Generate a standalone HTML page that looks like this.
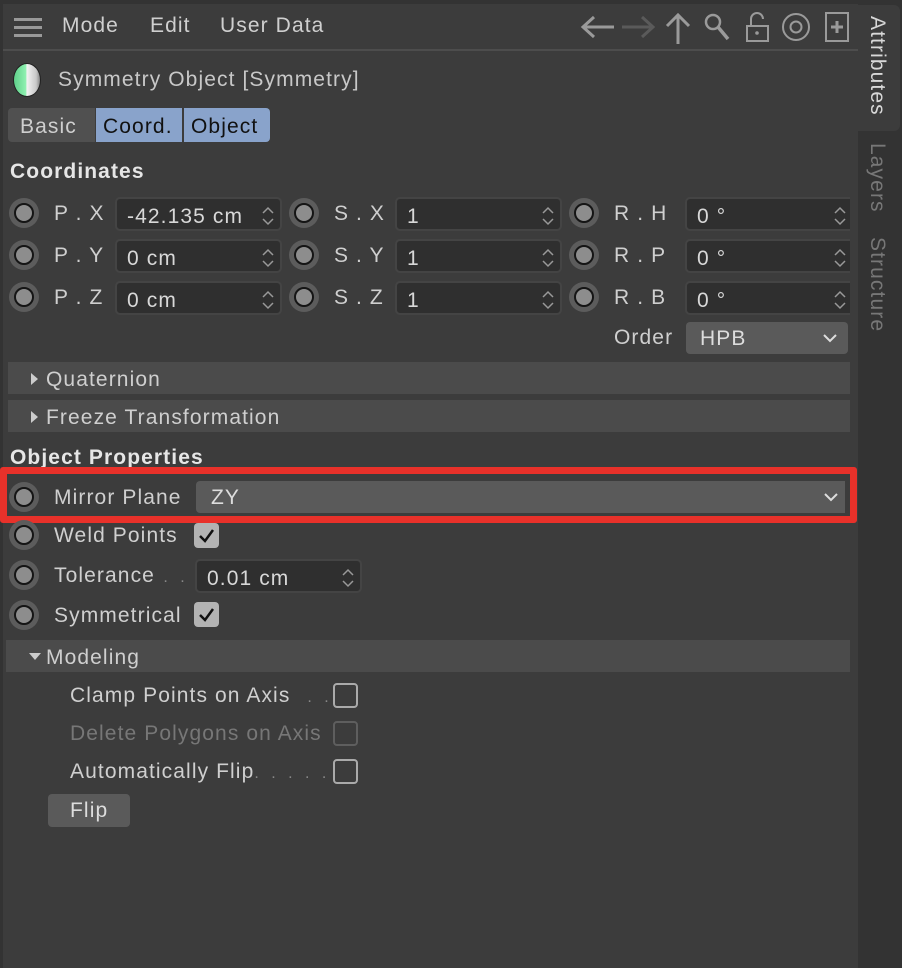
<!DOCTYPE html>
<html><head><meta charset="utf-8"><style>
*{box-sizing:border-box;margin:0;padding:0}
body{width:902px;height:968px;background:#3c3c3c;font-family:"Liberation Sans",sans-serif;color:#cfcfcf;position:relative;overflow:hidden;font-size:21px;letter-spacing:1.1px}
.a{position:absolute}
.t{position:absolute;line-height:1;white-space:nowrap}
.rad{position:absolute;width:30px;height:30px;border-radius:50%;background:#5c5c5c}
.rad::after{content:"";position:absolute;left:5px;top:5px;width:20px;height:20px;border-radius:50%;background:#8d8d8d;border:2px solid #151515;box-sizing:border-box}
.fld{position:absolute;height:34px;background:#2f2f2f;border:2px solid #444;border-radius:5px}
.fld span{position:absolute;left:10px;top:6px;font-size:21px;color:#d8d8d8}
.sp{position:absolute;right:4px;top:6px}
.bar{position:absolute;left:8px;width:842px;height:32px;background:#4b4b4b}
.cb{position:absolute;width:25px;height:25px;border-radius:4px}
</style></head><body>
<div class="a" style="left:0;top:0;width:858px;height:4px;background:#333"></div>
<div class="a" style="left:0;top:0;width:3px;height:968px;background:#333"></div>
<div class="a" style="left:858px;top:0;width:44px;height:968px;background:#333"></div>
<div class="a" style="left:858px;top:5px;width:42px;height:126px;background:#3c3c3c;border-radius:0 6px 6px 0"></div>
<div class="a" style="left:14px;top:18px;width:28px;height:3px;background:#999;box-shadow:0 8px 0 #999,0 16px 0 #999"></div>
<div class="t" style="left:62px;top:15px">Mode</div>
<div class="t" style="left:150px;top:15px">Edit</div>
<div class="t" style="left:220px;top:15px">User Data</div>
<div class="a" style="left:3px;top:49px;width:855px;height:2px;background:#4d4d4d"></div>
<svg class="a" style="left:578px;top:10px" width="280" height="36" viewBox="0 0 280 36" fill="none" stroke-width="3">
<path d="M36 17H6M16 7L5 17L16 27" stroke="#9a9a9a"/>
<path d="M44 17H74M64 7L75 17L64 27" stroke="#5a5a5a"/>
<path d="M100 34V5M89 16L100 5L111 16" stroke="#9a9a9a"/>
<circle cx="135" cy="12" r="7" stroke="#9a9a9a" stroke-width="2.5"/><path d="M140 17L150 29" stroke="#9a9a9a" stroke-width="3.5"/>
<rect x="169" y="16" width="21" height="15" stroke="#9a9a9a" stroke-width="2"/><path d="M173 16V9a6 6 0 0 1 12 0" stroke="#9a9a9a" stroke-width="2"/><circle cx="179" cy="23" r="1.8" fill="#9a9a9a" stroke="none"/>
<circle cx="218" cy="17" r="13" stroke="#9a9a9a" stroke-width="2"/><circle cx="218" cy="17" r="5.5" stroke="#9a9a9a" stroke-width="2"/>
<rect x="248" y="3" width="22" height="28" stroke="#9a9a9a" stroke-width="2"/><path d="M259 11V23M253 17H265" stroke="#9a9a9a" stroke-width="3"/>
</svg>
<div class="t" style="left:867px;top:16px;writing-mode:vertical-rl;color:#d8d8d8">Attributes</div>
<div class="t" style="left:867px;top:143px;writing-mode:vertical-rl;color:#777">Layers</div>
<div class="t" style="left:867px;top:237px;writing-mode:vertical-rl;color:#777">Structure</div>
<div class="a" style="left:13px;top:63px;width:28px;height:34px;border-radius:50%;background:linear-gradient(90deg,#5fd08a 0,#8ef0b0 45%,#f2f2f2 50%,#c8c8c8 85%,#888 100%);border:1px solid #222"></div>
<div class="t" style="left:58px;top:69px;color:#c8c8c8">Symmetry Object [Symmetry]</div>
<div class="a" style="left:8px;top:108px;width:87px;height:34px;background:#505050;border-radius:4px 0 0 4px"></div>
<div class="t" style="left:20px;top:116px;color:#cfcfcf">Basic</div>
<div class="a" style="left:96px;top:108px;width:86px;height:34px;background:#89a3cb"></div>
<div class="t" style="left:103px;top:116px;color:#111">Coord.</div>
<div class="a" style="left:184px;top:108px;width:86px;height:34px;background:#89a3cb;border-radius:0 4px 4px 0"></div>
<div class="t" style="left:191px;top:116px;color:#111">Object</div>
<div class="t" style="left:10px;top:161px;font-weight:bold;color:#e6e6e6">Coordinates</div>

<div class="rad" style="left:9px;top:198px"></div><div class="t" style="left:54px;top:203px">P . X</div>
<div class="rad" style="left:9px;top:240px"></div><div class="t" style="left:54px;top:245px">P . Y</div>
<div class="rad" style="left:9px;top:282px"></div><div class="t" style="left:54px;top:287px">P . Z</div>
<div class="rad" style="left:289px;top:198px"></div><div class="t" style="left:334px;top:203px">S . X</div>
<div class="rad" style="left:289px;top:240px"></div><div class="t" style="left:334px;top:245px">S . Y</div>
<div class="rad" style="left:289px;top:282px"></div><div class="t" style="left:334px;top:287px">S . Z</div>
<div class="rad" style="left:569px;top:198px"></div><div class="t" style="left:614px;top:203px">R . H</div>
<div class="rad" style="left:569px;top:240px"></div><div class="t" style="left:614px;top:245px">R . P</div>
<div class="rad" style="left:569px;top:282px"></div><div class="t" style="left:614px;top:287px">R . B</div>

<div class="fld" style="left:115px;top:197px;width:167px"><span>-42.135 cm</span><svg class="sp" width="16" height="22"><path d="M3 8L8 3L13 8M3 14L8 19L13 14" stroke="#999" stroke-width="1.5" fill="none"/></svg></div>
<div class="fld" style="left:115px;top:239px;width:167px"><span>0 cm</span><svg class="sp" width="16" height="22"><path d="M3 8L8 3L13 8M3 14L8 19L13 14" stroke="#999" stroke-width="1.5" fill="none"/></svg></div>
<div class="fld" style="left:115px;top:281px;width:167px"><span>0 cm</span><svg class="sp" width="16" height="22"><path d="M3 8L8 3L13 8M3 14L8 19L13 14" stroke="#999" stroke-width="1.5" fill="none"/></svg></div>
<div class="fld" style="left:395px;top:197px;width:167px"><span>1</span><svg class="sp" width="16" height="22"><path d="M3 8L8 3L13 8M3 14L8 19L13 14" stroke="#999" stroke-width="1.5" fill="none"/></svg></div>
<div class="fld" style="left:395px;top:239px;width:167px"><span>1</span><svg class="sp" width="16" height="22"><path d="M3 8L8 3L13 8M3 14L8 19L13 14" stroke="#999" stroke-width="1.5" fill="none"/></svg></div>
<div class="fld" style="left:395px;top:281px;width:167px"><span>1</span><svg class="sp" width="16" height="22"><path d="M3 8L8 3L13 8M3 14L8 19L13 14" stroke="#999" stroke-width="1.5" fill="none"/></svg></div>
<div class="fld" style="left:685px;top:197px;width:173px;border-right:none;border-radius:5px 0 0 5px"><span>0 °</span><svg class="sp" style="right:10px" width="16" height="22"><path d="M3 8L8 3L13 8M3 14L8 19L13 14" stroke="#999" stroke-width="1.5" fill="none"/></svg></div>
<div class="fld" style="left:685px;top:239px;width:173px;border-right:none;border-radius:5px 0 0 5px"><span>0 °</span><svg class="sp" style="right:10px" width="16" height="22"><path d="M3 8L8 3L13 8M3 14L8 19L13 14" stroke="#999" stroke-width="1.5" fill="none"/></svg></div>
<div class="fld" style="left:685px;top:281px;width:173px;border-right:none;border-radius:5px 0 0 5px"><span>0 °</span><svg class="sp" style="right:10px" width="16" height="22"><path d="M3 8L8 3L13 8M3 14L8 19L13 14" stroke="#999" stroke-width="1.5" fill="none"/></svg></div>
<div class="a" style="left:850px;top:190px;width:8px;height:130px;background:#3c3c3c"></div>

<div class="t" style="left:614px;top:327px">Order</div>
<div class="a" style="left:686px;top:322px;width:162px;height:32px;background:#5a5a5a;border-radius:4px"></div>
<div class="t" style="left:700px;top:328px;color:#ddd">HPB</div>
<svg class="a" style="left:822px;top:332px" width="16" height="12"><path d="M2 3L8 9L14 3" stroke="#ddd" stroke-width="2" fill="none"/></svg>

<div class="bar" style="top:362px"></div>
<svg class="a" style="left:30px;top:372px" width="10" height="14"><path d="M1 1L8 7L1 13Z" fill="#ccc"/></svg>
<div class="t" style="left:46px;top:369px">Quaternion</div>
<div class="bar" style="top:400px"></div>
<svg class="a" style="left:30px;top:410px" width="10" height="14"><path d="M1 1L8 7L1 13Z" fill="#ccc"/></svg>
<div class="t" style="left:46px;top:407px">Freeze Transformation</div>

<div class="t" style="left:10px;top:447px;font-weight:bold;color:#e6e6e6">Object Properties</div>

<div class="rad" style="left:9px;top:482px"></div><div class="t" style="left:54px;top:487px">Mirror Plane</div>
<div class="a" style="left:196px;top:481px;width:649px;height:32px;background:#5a5a5a;border-radius:4px 0 0 4px"></div>
<div class="t" style="left:211px;top:487px;color:#ddd">ZY</div>
<svg class="a" style="left:823px;top:491px" width="16" height="12"><path d="M2 3L8 9L14 3" stroke="#ddd" stroke-width="2" fill="none"/></svg>
<div class="a" style="left:0;top:467px;width:857px;height:56px;border:7px solid #e8312a;border-radius:3px"></div>

<div class="rad" style="left:9px;top:520px"></div><div class="t" style="left:54px;top:525px">Weld Points</div>
<div class="cb" style="left:194px;top:523px;background:#b3b3b3"></div>
<svg class="a" style="left:197px;top:527px" width="20" height="18"><path d="M3 9L8 14L16 3" stroke="#111" stroke-width="2.5" fill="none"/></svg>
<div class="rad" style="left:9px;top:560px"></div><div class="t" style="left:54px;top:565px">Tolerance<span style="color:#888;font-size:16px;letter-spacing:4px"> . .</span></div>
<div class="fld" style="left:195px;top:559px;width:167px"><span>0.01 cm</span><svg class="sp" width="16" height="22"><path d="M3 8L8 3L13 8M3 14L8 19L13 14" stroke="#999" stroke-width="1.5" fill="none"/></svg></div>
<div class="rad" style="left:9px;top:600px"></div><div class="t" style="left:54px;top:605px">Symmetrical</div>
<div class="cb" style="left:194px;top:602px;background:#b3b3b3"></div>
<svg class="a" style="left:197px;top:606px" width="20" height="18"><path d="M3 9L8 14L16 3" stroke="#111" stroke-width="2.5" fill="none"/></svg>

<div class="bar" style="left:6px;width:844px;top:640px"></div>
<svg class="a" style="left:28px;top:652px" width="14" height="10"><path d="M1 1L13 1L7 8Z" fill="#ccc"/></svg>
<div class="t" style="left:46px;top:647px">Modeling</div>

<div class="t" style="left:70px;top:685px">Clamp Points on Axis<span style="color:#888;font-size:16px;letter-spacing:4px">&nbsp; . .</span></div>
<div class="cb" style="left:333px;top:683px;border:2px solid #aaa"></div>
<div class="t" style="left:70px;top:723px;color:#777">Delete Polygons on Axis</div>
<div class="cb" style="left:333px;top:721px;border:2px solid #5e5e5e"></div>
<div class="t" style="left:70px;top:761px">Automatically Flip<span style="color:#888;font-size:16px;letter-spacing:4px">. . . . .</span></div>
<div class="cb" style="left:333px;top:759px;border:2px solid #aaa"></div>

<div class="a" style="left:48px;top:794px;width:82px;height:33px;background:#5a5a5a;border-radius:4px"></div>
<div class="t" style="left:70px;top:800px;color:#ddd">Flip</div>
</body></html>
